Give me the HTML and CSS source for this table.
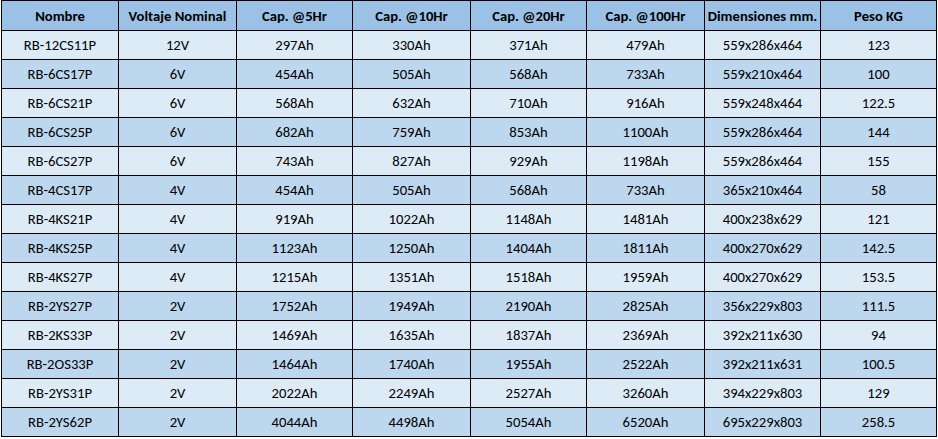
FILE: index.html
```html
<!DOCTYPE html>
<html lang="es">
<head>
<meta charset="utf-8">
<title>Baterías</title>
<link rel="stylesheet" href="styles.css">
</head>
<body>
<div class="wrap">
  <div class="grid">
    <div class="c h">Nombre</div><div class="c h">Voltaje Nominal</div><div class="c h">Cap. @5Hr</div><div class="c h">Cap. @10Hr</div><div class="c h">Cap. @20Hr</div><div class="c h">Cap. @100Hr</div><div class="c h">Dimensiones mm.</div><div class="c h">Peso KG</div>

    <div class="c a">RB-12CS11P</div><div class="c a">12V</div><div class="c a">297Ah</div><div class="c a">330Ah</div><div class="c a">371Ah</div><div class="c a">479Ah</div><div class="c a">559x286x464</div><div class="c a">123</div>
    <div class="c b">RB-6CS17P</div><div class="c b">6V</div><div class="c b">454Ah</div><div class="c b">505Ah</div><div class="c b">568Ah</div><div class="c b">733Ah</div><div class="c b">559x210x464</div><div class="c b">100</div>
    <div class="c a">RB-6CS21P</div><div class="c a">6V</div><div class="c a">568Ah</div><div class="c a">632Ah</div><div class="c a">710Ah</div><div class="c a">916Ah</div><div class="c a">559x248x464</div><div class="c a">122.5</div>
    <div class="c b">RB-6CS25P</div><div class="c b">6V</div><div class="c b">682Ah</div><div class="c b">759Ah</div><div class="c b">853Ah</div><div class="c b">1100Ah</div><div class="c b">559x286x464</div><div class="c b">144</div>
    <div class="c a">RB-6CS27P</div><div class="c a">6V</div><div class="c a">743Ah</div><div class="c a">827Ah</div><div class="c a">929Ah</div><div class="c a">1198Ah</div><div class="c a">559x286x464</div><div class="c a">155</div>
    <div class="c b">RB-4CS17P</div><div class="c b">4V</div><div class="c b">454Ah</div><div class="c b">505Ah</div><div class="c b">568Ah</div><div class="c b">733Ah</div><div class="c b">365x210x464</div><div class="c b">58</div>
    <div class="c a">RB-4KS21P</div><div class="c a">4V</div><div class="c a">919Ah</div><div class="c a">1022Ah</div><div class="c a">1148Ah</div><div class="c a">1481Ah</div><div class="c a">400x238x629</div><div class="c a">121</div>
    <div class="c b">RB-4KS25P</div><div class="c b">4V</div><div class="c b">1123Ah</div><div class="c b">1250Ah</div><div class="c b">1404Ah</div><div class="c b">1811Ah</div><div class="c b">400x270x629</div><div class="c b">142.5</div>
    <div class="c a">RB-4KS27P</div><div class="c a">4V</div><div class="c a">1215Ah</div><div class="c a">1351Ah</div><div class="c a">1518Ah</div><div class="c a">1959Ah</div><div class="c a">400x270x629</div><div class="c a">153.5</div>
    <div class="c b">RB-2YS27P</div><div class="c b">2V</div><div class="c b">1752Ah</div><div class="c b">1949Ah</div><div class="c b">2190Ah</div><div class="c b">2825Ah</div><div class="c b">356x229x803</div><div class="c b">111.5</div>
    <div class="c a">RB-2KS33P</div><div class="c a">2V</div><div class="c a">1469Ah</div><div class="c a">1635Ah</div><div class="c a">1837Ah</div><div class="c a">2369Ah</div><div class="c a">392x211x630</div><div class="c a">94</div>
    <div class="c b">RB-2OS33P</div><div class="c b">2V</div><div class="c b">1464Ah</div><div class="c b">1740Ah</div><div class="c b">1955Ah</div><div class="c b">2522Ah</div><div class="c b">392x211x631</div><div class="c b">100.5</div>
    <div class="c a">RB-2YS31P</div><div class="c a">2V</div><div class="c a">2022Ah</div><div class="c a">2249Ah</div><div class="c a">2527Ah</div><div class="c a">3260Ah</div><div class="c a">394x229x803</div><div class="c a">129</div>
    <div class="c b">RB-2YS62P</div><div class="c b">2V</div><div class="c b">4044Ah</div><div class="c b">4498Ah</div><div class="c b">5054Ah</div><div class="c b">6520Ah</div><div class="c b">695x229x803</div><div class="c b">258.5</div>
  </div>
</div>
</body>
</html>
```

FILE: styles.css
```css
html, body {
  margin: 0;
  padding: 0;
  background: #ffffff;
}

.wrap {
  padding-left: 1px;
}

.grid {
  display: grid;
  grid-template-columns: 117px 118px 116px 118px 116px 118px 116px 116px;
  grid-template-rows: 30px repeat(14, 29px);
  border-left: 1px solid #000;
  border-top: 1px solid #000;
  width: max-content;
  font-family: Carlito, Calibri, Lato, "Liberation Sans", sans-serif;
  font-size: 14.67px;
  color: #000;
}

.c {
  box-sizing: border-box;
  border-right: 1px solid #000;
  border-bottom: 1px solid #000;
  display: flex;
  align-items: center;
  justify-content: center;
  white-space: nowrap;
  overflow: hidden;
}

.h {
  background: #9bc2e6;
  font-weight: bold;
}

.a {
  background: #ddebf7;
}

.b {
  background: #bdd7ee;
}
```
